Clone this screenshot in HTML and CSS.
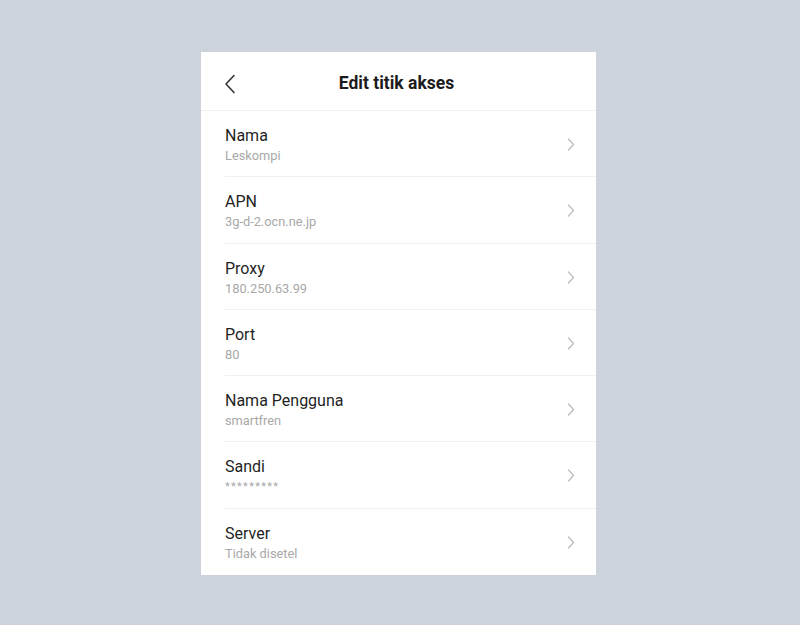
FILE: index.html
```html
<!DOCTYPE html>
<html lang="id">
<head>
<meta charset="utf-8">
<title>Edit titik akses</title>
<link rel="stylesheet" href="styles.css">
</head>
<body>
<div class="stage">
  <div class="card">
    <div class="header">
      <span class="back">
        <svg width="12" height="20" viewBox="0 0 12 20"><path d="M10 1.5 L2 10 L10 18.5" fill="none" stroke="#333" stroke-width="1.6" stroke-linecap="round" stroke-linejoin="round"/></svg>
      </span>
      <h1 class="title">Edit titik akses</h1>
    </div>
    <ul class="list">
      <li class="row"><div class="row-inner"><div class="texts"><div class="label">Nama</div><div class="value">Leskompi</div></div><svg class="chev" width="8" height="13" viewBox="0 0 8 13"><path d="M1.5 1 L6.5 6.5 L1.5 12" fill="none" stroke="#bdbdbd" stroke-width="1.3" stroke-linecap="round" stroke-linejoin="round"/></svg></div></li>
      <li class="row"><div class="row-inner"><div class="texts"><div class="label">APN</div><div class="value">3g-d-2.ocn.ne.jp</div></div><svg class="chev" width="8" height="13" viewBox="0 0 8 13"><path d="M1.5 1 L6.5 6.5 L1.5 12" fill="none" stroke="#bdbdbd" stroke-width="1.3" stroke-linecap="round" stroke-linejoin="round"/></svg></div></li>
      <li class="row"><div class="row-inner"><div class="texts"><div class="label">Proxy</div><div class="value">180.250.63.99</div></div><svg class="chev" width="8" height="13" viewBox="0 0 8 13"><path d="M1.5 1 L6.5 6.5 L1.5 12" fill="none" stroke="#bdbdbd" stroke-width="1.3" stroke-linecap="round" stroke-linejoin="round"/></svg></div></li>
      <li class="row"><div class="row-inner"><div class="texts"><div class="label">Port</div><div class="value">80</div></div><svg class="chev" width="8" height="13" viewBox="0 0 8 13"><path d="M1.5 1 L6.5 6.5 L1.5 12" fill="none" stroke="#bdbdbd" stroke-width="1.3" stroke-linecap="round" stroke-linejoin="round"/></svg></div></li>
      <li class="row"><div class="row-inner"><div class="texts"><div class="label">Nama Pengguna</div><div class="value">smartfren</div></div><svg class="chev" width="8" height="13" viewBox="0 0 8 13"><path d="M1.5 1 L6.5 6.5 L1.5 12" fill="none" stroke="#bdbdbd" stroke-width="1.3" stroke-linecap="round" stroke-linejoin="round"/></svg></div></li>
      <li class="row"><div class="row-inner"><div class="texts"><div class="label">Sandi</div><div class="value stars">*********</div></div><svg class="chev" width="8" height="13" viewBox="0 0 8 13"><path d="M1.5 1 L6.5 6.5 L1.5 12" fill="none" stroke="#bdbdbd" stroke-width="1.3" stroke-linecap="round" stroke-linejoin="round"/></svg></div></li>
      <li class="row"><div class="row-inner"><div class="texts"><div class="label">Server</div><div class="value">Tidak disetel</div></div><svg class="chev" width="8" height="13" viewBox="0 0 8 13"><path d="M1.5 1 L6.5 6.5 L1.5 12" fill="none" stroke="#bdbdbd" stroke-width="1.3" stroke-linecap="round" stroke-linejoin="round"/></svg></div></li>
    </ul>
  </div>
</div>
</body>
</html>
```
FILE: styles.css
```css
html, body {
  margin: 0;
  padding: 0;
}
body {
  background: #cdd3da;
  font-family: Roboto, "Noto Sans", "Liberation Sans", sans-serif;
  width: 800px;
  height: 625px;
  overflow: hidden;
}
.stage {
  padding: 52px 0 0 201px;
}
.card {
  width: 395px;
  background: #ffffff;
}
.header {
  height: 58px;
  display: flex;
  align-items: center;
  justify-content: center;
  border-bottom: 1px solid #f0f0f0;
  position: relative;
}
.back {
  position: absolute;
  left: 23px;
  top: 22px;
  display: block;
  line-height: 0;
}
.title {
  margin: 4px 0 0 -4px;
  font-size: 17.5px;
  font-weight: 700;
  color: #1c1c1c;
}
.list {
  list-style: none;
  margin: 0;
  padding: 0;
}
.row {
  padding-left: 24px;
  height: 66.3px;
  box-sizing: border-box;
}
.row-inner {
  height: 100%;
  box-sizing: border-box;
  border-bottom: 1px solid #f0f0f0;
  display: flex;
  align-items: flex-start;
  justify-content: space-between;
  padding-right: 21px;
}
.row:last-child .row-inner {
  border-bottom: none;
}
.texts {
  padding-top: 15px;
}
.label {
  font-size: 16px;
  line-height: 20px;
  color: #1f1f1f;
}
.value {
  margin-top: 2px;
  font-size: 12.8px;
  line-height: 16px;
  color: #a8a8a8;
}
.stars {
  font-size: 11px;
  letter-spacing: 1.3px;
}
.chev {
  margin-top: 27px;
}
```
